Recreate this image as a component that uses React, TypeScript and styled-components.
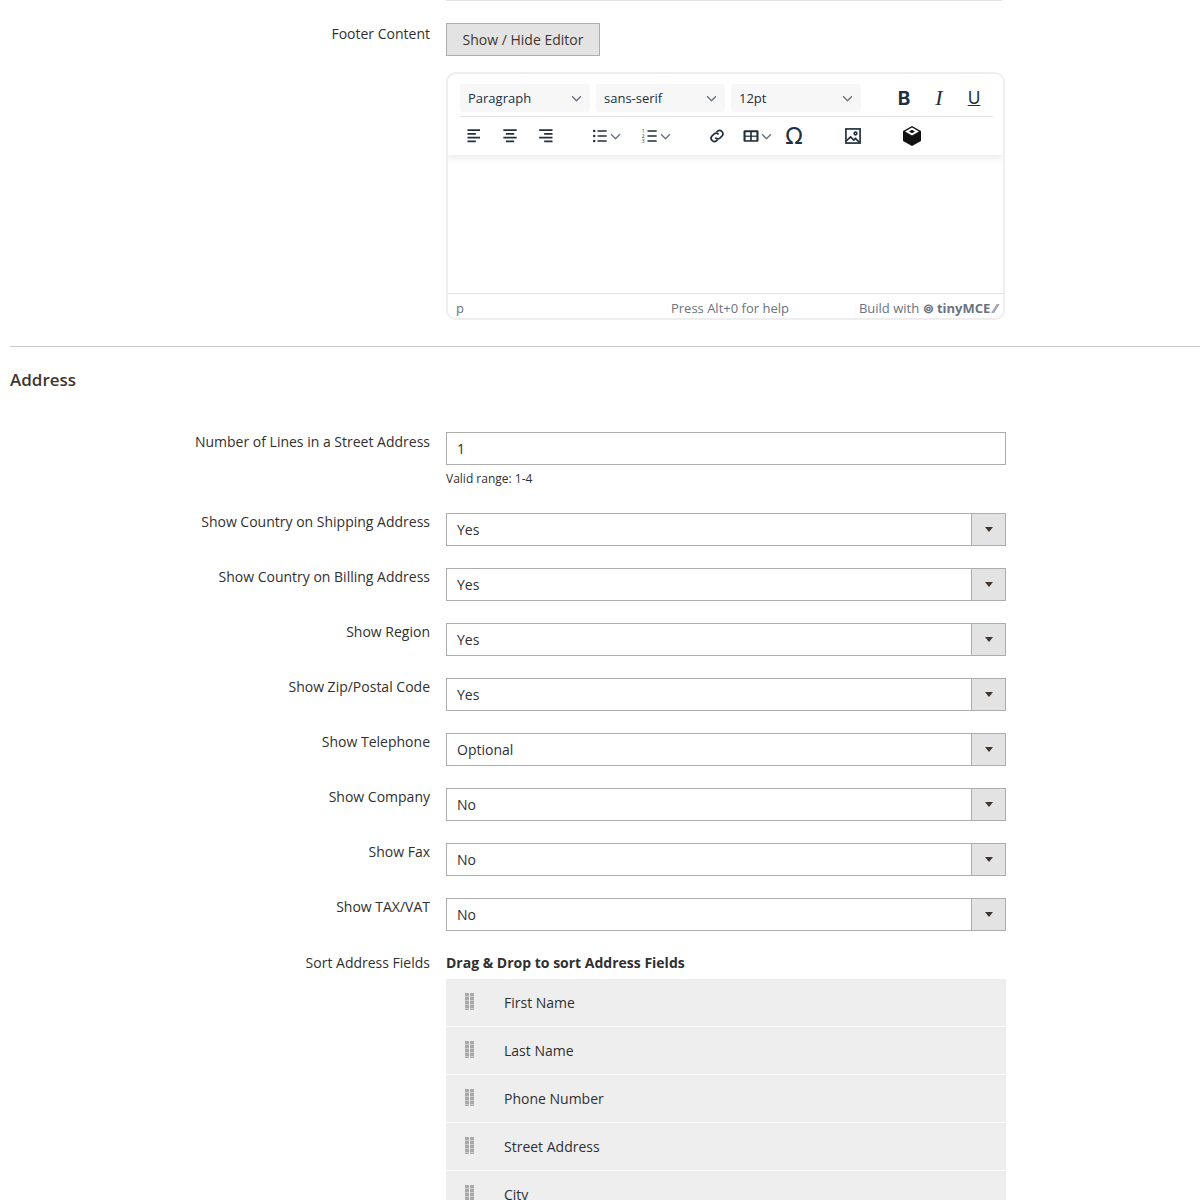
import React from "react";
import styled, { createGlobalStyle } from "styled-components";

const Global = createGlobalStyle`
  body { margin: 0; font-family: "Open Sans", sans-serif; color: #303030; background: #fff; }
`;
const Page = styled.div` padding: 0 0 0 10px; width: 1190px; overflow: hidden; height: 1200px; `;
const TopLine = styled.div` margin-left: 436px; width: 556px; height: 1px; background: #e3e3e3; `;
const Row = styled.div<{ mt?: number }>`
  display: grid; grid-template-columns: 420px 560px; column-gap: 16px; margin-top: ${p => p.mt ?? 0}px;
`;
const Label = styled.div<{ pt?: number }>`
  text-align: right; font-size: 14px; font-weight: 500; color: #303030; padding-top: ${p => p.pt ?? 1}px; line-height: 18px;
`;
const ToggleBtn = styled.button`
  font-family: "Open Sans", sans-serif; font-size: 14px; color: #41362f; background: #e3e3e3;
  border: 1px solid #adadad; height: 33px; padding: 0 13px; font-weight: 500; width: 154px;
`;
const Editor = styled.div`
  margin-top: 16px; width: 559px; height: 248px; border: 2px solid #eee; border-radius: 10px; box-sizing: border-box;
  display: flex; flex-direction: column; overflow: hidden;
`;
const Toolbar = styled.div` padding: 6px 10px 0 12px; box-shadow: 0 4px 6px rgba(0,0,0,0.07); `;
const TRow = styled.div<{ border?: boolean }>`
  display: flex; align-items: center; height: ${p => p.border ? 36 : 38}px;
  ${p => p.border ? "border-bottom: 1px solid #e3e3e3;" : ""}
`;
const Drop = styled.div<{ w: number }>`
  width: ${p => p.w}px; height: 28px; background: #f7f7f7; border-radius: 3px; margin-right: 6px; box-sizing: border-box;
  display: flex; align-items: center; justify-content: space-between; padding: 0 8px; font-size: 13px; color: #222f3e;
`;
const Ico = styled.div<{ ml?: number; w?: number }>`
  width: ${p => p.w ?? 30}px; height: 28px; margin-left: ${p => p.ml ?? 0}px; display: flex; align-items: center; justify-content: center;
  color: #222f3e; font-size: 18px;
`;
const Body = styled.div` flex: 1; border-bottom: 1px solid #e3e3e3; `;
const Status = styled.div`
  height: 24px; display: flex; align-items: center; padding: 0 6px 0 8px; font-size: 13px; color: #6a7381;
  padding-top: 4px; box-sizing: border-box;
`;
const Brand = styled.b` color: #6a7381; font-weight: 700; `;
const Hr = styled.div` margin-top: 26px; height: 1px; background: #ccc; `;
const H = styled.div` font-size: 17px; font-weight: 600; color: #41362f; margin-top: 21px; `;
const Input = styled.div`
  height: 33px; border: 1px solid #adadad; box-sizing: border-box; font-size: 14px; display: flex; align-items: center; padding-left: 10px;
`;
const Note = styled.div` font-size: 12px; margin-top: 5px; color: #303030; `;
const Select = styled.div`
  height: 33px; border: 1px solid #adadad; box-sizing: border-box; font-size: 14px; display: flex; align-items: center;
`;
const SelText = styled.div` flex: 1; padding-left: 10px; `;
const SelBtn = styled.div`
  width: 33px; height: 100%; background: #e3e3e3; border-left: 1px solid #adadad; display: flex; align-items: center; justify-content: center;
  &::after { content: ""; border-left: 4px solid transparent; border-right: 4px solid transparent; border-top: 5px solid #41362f; }
`;
const DDTitle = styled.div` font-weight: 700; font-size: 14px; padding-top: 1px; line-height: 18px; `;
const List = styled.div` margin-top: 7px; `;
const Item = styled.div`
  height: 47px; background: #eee; margin-top: 1px; display: flex; align-items: center; font-size: 14px; color: #303030;
`;
const Grip = styled.div`
  width: 9px; height: 17px; margin: -3px 30px 0 19px;
  background:
    repeating-linear-gradient(90deg, transparent 0 4px, #eee 4px 5px),
    repeating-linear-gradient(#a9a9a9 0 3px, #c9c9c9 3px 4px);
`;

const S = (p: { children: React.ReactNode; w?: number }) => (
  <svg width={p.w ?? 20} height={20} viewBox="0 0 24 24" fill="none" stroke="#222f3e" strokeWidth={2}>{p.children}</svg>
);
const Chev = () => (<svg width="11" height="11" viewBox="0 0 10 10"><path d="M1 3l4 4 4-4" stroke="#6a7381" strokeWidth="1.2" fill="none"/></svg>);

const selects: [string, string][] = [
  ["Show Country on Shipping Address", "Yes"], ["Show Country on Billing Address", "Yes"], ["Show Region", "Yes"],
  ["Show Zip/Postal Code", "Yes"], ["Show Telephone", "Optional"], ["Show Company", "No"], ["Show Fax", "No"], ["Show TAX/VAT", "No"],
];
const items = ["First Name", "Last Name", "Phone Number", "Street Address", "City"];

export default function App() {
  return (
    <Page>
      <Global />
      <TopLine />
      <Row mt={22}>
        <Label pt={2}>Footer Content</Label>
        <div>
          <ToggleBtn>Show / Hide Editor</ToggleBtn>
          <Editor>
            <Toolbar>
              <TRow border>
                <Drop w={130}>Paragraph<Chev /></Drop>
                <Drop w={129}>sans-serif<Chev /></Drop>
                <Drop w={130}>12pt<Chev /></Drop>
                <Ico ml={22} style={{ fontWeight: 700, fontFamily: "Inter, sans-serif", fontSize: 19 }}>B</Ico>
                <Ico ml={5} style={{ fontStyle: "italic", fontFamily: "Liberation Serif, serif", fontSize: 22 }}>I</Ico>
                <Ico ml={5} style={{ textDecoration: "underline", fontSize: 17, fontFamily: "Inter, sans-serif" }}>U</Ico>
              </TRow>
              <TRow>
                {[["M3 5h15","M3 9.5h10","M3 14h15","M3 18.5h10"],["M4 5h16","M7 9.5h10","M4 14h16","M7 18.5h10"],["M5 5h16","M11 9.5h10","M5 14h16","M11 18.5h10"]].map((ls, i) => (
                  <Ico key={i} ml={i ? 5 : 0}><S>{ls.map(d => <path key={d} d={d} />)}</S></Ico>
                ))}
                <Ico ml={24} w={42}><S><circle cx="5" cy="6" r="1.5" fill="#222f3e" stroke="none"/><circle cx="5" cy="12" r="1.5" fill="#222f3e" stroke="none"/><circle cx="5" cy="18" r="1.5" fill="#222f3e" stroke="none"/><path d="M9 6h11M9 12h11M9 18h11"/></S><Chev /></Ico>
                <Ico ml={8} w={42}><S><path d="M9 6h11M9 12h11M9 18h11"/><text x="2" y="8" fontSize="6" fill="#222f3e" stroke="none">1</text><text x="2" y="14" fontSize="6" fill="#222f3e" stroke="none">2</text><text x="2" y="20" fontSize="6" fill="#222f3e" stroke="none">3</text></S><Chev /></Ico>
                <Ico ml={26}><S><path d="M10 14a4 4 0 0 0 5.5.5l3-3a4 4 0 0 0-5.5-5.5l-1.5 1.5"/><path d="M14 10a4 4 0 0 0-5.5-.5l-3 3a4 4 0 0 0 5.5 5.5l1.5-1.5"/></S></Ico>
                <Ico ml={3} w={42}><S><rect x="3" y="5" width="18" height="14" rx="1.5" fill="#222f3e" stroke="none"/><rect x="5.5" y="7.5" width="5.5" height="4" fill="#fff" stroke="none"/><rect x="13" y="7.5" width="5.5" height="4" fill="#fff" stroke="none"/><rect x="5.5" y="13" width="5.5" height="4" fill="#fff" stroke="none"/><rect x="13" y="13" width="5.5" height="4" fill="#fff" stroke="none"/></S><Chev /></Ico>
                <Ico ml={2} style={{ fontSize: 23, fontFamily: "DejaVu Sans, sans-serif" }}>Ω</Ico>
                <Ico ml={29}><S><rect x="3.5" y="3.5" width="17" height="17"/><path d="M4 18l5-5 4 4 2-2 5 5" /><circle cx="15" cy="9" r="1.6"/></S></Ico>
                <Ico ml={29}><svg width="24" height="24" viewBox="0 0 24 24"><path d="M12 2l9 5v10l-9 5-9-5V7z" fill="#111"/><path d="M12 3.5l7 4-7 4-7-4z" fill="#fff"/><path d="M9 7.5l3-1.7 3 1.7-3 1.7z" fill="#111"/></svg></Ico>
              </TRow>
            </Toolbar>
            <Body />
            <Status>
              <span style={{ flex: 1 }}>p</span>
              <span style={{ marginRight: 70 }}>Press Alt+0 for help</span>
              <span>Build with <Brand>⊚ tinyMCE</Brand> ⁄⁄</span>
            </Status>
          </Editor>
        </div>
      </Row>
      <Hr />
      <H>Address</H>
      <Row mt={41}>
        <Label>Number of Lines in a Street Address</Label>
        <div>
          <Input>1</Input>
          <Note>Valid range: 1-4</Note>
        </div>
      </Row>
      {selects.map(([l, v], i) => (
        <Row key={l} mt={i ? 22 : 26}>
          <Label pt={i ? 0 : 0}>{l}</Label>
          <Select><SelText>{v}</SelText><SelBtn /></Select>
        </Row>
      ))}
      <Row mt={22}>
        <Label>Sort Address Fields</Label>
        <div>
          <DDTitle>Drag &amp; Drop to sort Address Fields</DDTitle>
          <List>
            {items.map(t => <Item key={t}><Grip />{t}</Item>)}
          </List>
        </div>
      </Row>
    </Page>
  );
}
